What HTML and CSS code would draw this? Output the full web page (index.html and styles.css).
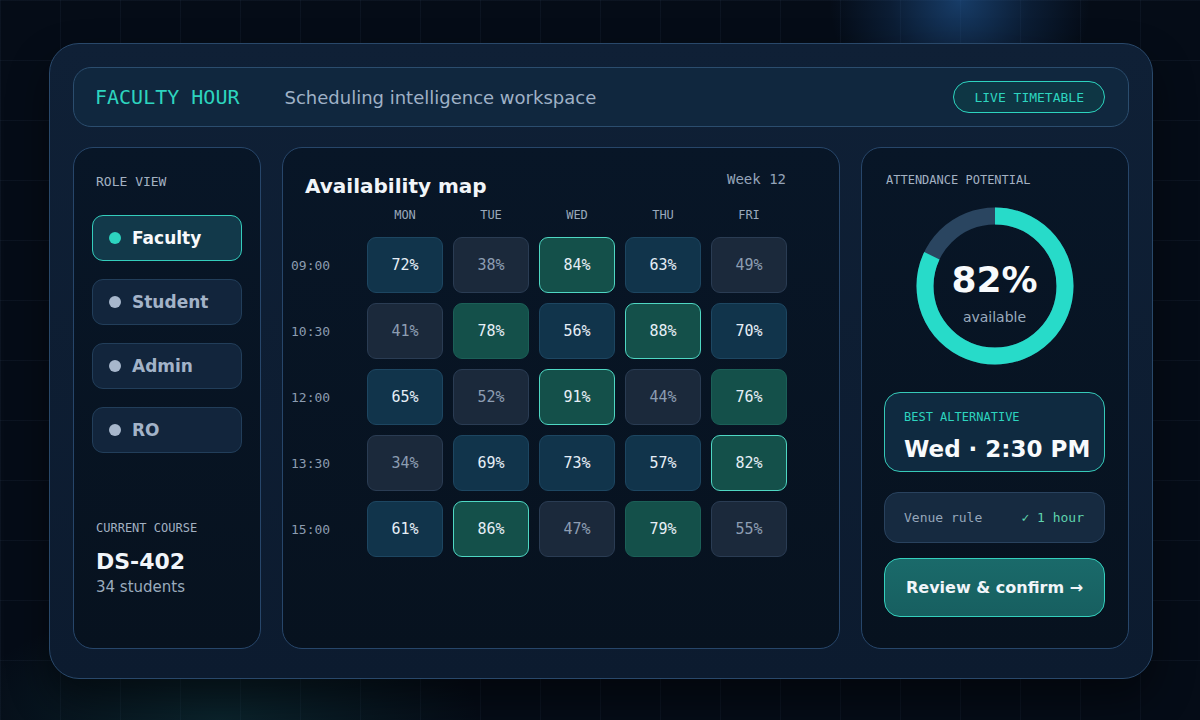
FILE: index.html
```html
<!DOCTYPE html>
<html>

<head>
  <meta charset="utf-8">
  <link rel="stylesheet" href="styles.css">
</head>

<body>
  <div class="shell">
    <div class="topbar">
      <div class="brand">FACULTY HOUR</div>
      <div class="tagline">Scheduling intelligence workspace</div>
      <div class="live-pill">LIVE TIMETABLE</div>
    </div>

    <div class="workspace">
      <!-- roles + course -->
      <div class="panel side">
        <div class="label role-label">ROLE VIEW</div>
        <div class="roles">
          <div class="role active"><span class="role-dot"></span>Faculty</div>
          <div class="role"><span class="role-dot"></span>Student</div>
          <div class="role"><span class="role-dot"></span>Admin</div>
          <div class="role"><span class="role-dot"></span>RO</div>
        </div>
        <div class="course">
          <div class="label">CURRENT COURSE</div>
          <div class="course-code">DS-402</div>
          <div class="course-size">34 students</div>
        </div>
      </div>

      <!-- heatmap -->
      <div class="panel map">
        <div class="map-head">
          <h2 class="map-title">Availability map</h2>
          <div class="week">Week 12</div>
        </div>
        <div class="heat-grid">
          <div></div>
          <div class="day">MON</div>
          <div class="day">TUE</div>
          <div class="day">WED</div>
          <div class="day">THU</div>
          <div class="day">FRI</div>

          <div class="time">09:00</div>
          <div class="cell mid">72%</div>
          <div class="cell low">38%</div>
          <div class="cell top">84%</div>
          <div class="cell mid">63%</div>
          <div class="cell low">49%</div>

          <div class="time">10:30</div>
          <div class="cell low">41%</div>
          <div class="cell high">78%</div>
          <div class="cell mid">56%</div>
          <div class="cell top">88%</div>
          <div class="cell mid">70%</div>

          <div class="time">12:00</div>
          <div class="cell mid">65%</div>
          <div class="cell low">52%</div>
          <div class="cell top">91%</div>
          <div class="cell low">44%</div>
          <div class="cell high">76%</div>

          <div class="time">13:30</div>
          <div class="cell low">34%</div>
          <div class="cell mid">69%</div>
          <div class="cell mid">73%</div>
          <div class="cell mid">57%</div>
          <div class="cell top">82%</div>

          <div class="time">15:00</div>
          <div class="cell mid">61%</div>
          <div class="cell top">86%</div>
          <div class="cell low">47%</div>
          <div class="cell high">79%</div>
          <div class="cell low">55%</div>
        </div>
      </div>

      <!-- summary -->
      <div class="panel summary">
        <div class="label attend-label">ATTENDANCE POTENTIAL</div>
        <div class="donut">
          <svg class="donut-ring" viewBox="0 0 158 158">
            <circle cx="79" cy="79" r="70" fill="none" stroke="#2a4560" stroke-width="17" />
            <circle cx="79" cy="79" r="70" fill="none" stroke="#27dbc9" stroke-width="17"
              stroke-dasharray="360.65 439.82" transform="rotate(-90 79 79)" />
          </svg>
          <div class="donut-text">
            <div class="donut-value">82%</div>
            <div class="donut-caption">available</div>
          </div>
        </div>

        <div class="best">
          <div class="best-label">BEST ALTERNATIVE</div>
          <div class="best-slot">Wed · 2:30 PM</div>
        </div>

        <div class="rule">
          <span class="rule-name">Venue rule</span>
          <span class="rule-ok">✓ 1 hour</span>
        </div>

        <button class="confirm">Review &amp; confirm →</button>
      </div>
    </div>
  </div>
</body>

</html>
```

FILE: styles.css
```css
* {
  box-sizing: border-box;
  margin: 0;
  padding: 0;
}

:root {
  --page: #050c17;
  --shell-border: #29486a;
  --panel-border: #27466a;
  --teal: #2dd4bf;
  --text: #f1f5f9;
  --mono: "DejaVu Sans Mono", "Liberation Mono", monospace;
  --sans: "DejaVu Sans", "Noto Sans", sans-serif;
}

body {
  width: 1200px;
  height: 720px;
  overflow: hidden;
  font-family: var(--sans);
  color: var(--text);
  background:
    radial-gradient(circle at 960px 0px, rgba(38, 100, 170, 0.55) 0, rgba(30, 80, 140, 0.25) 70px, rgba(20, 50, 90, 0) 130px),
    radial-gradient(ellipse 260px 120px at 220px 720px, rgba(30, 120, 120, 0.22), rgba(30, 120, 120, 0)),
    linear-gradient(rgba(120, 160, 200, 0.06) 1px, transparent 1px),
    linear-gradient(90deg, rgba(120, 160, 200, 0.06) 1px, transparent 1px),
    var(--page);
  background-size: auto, auto, 60px 60px, 60px 60px, auto;
}

.shell {
  width: 1104px;
  height: 636px;
  margin: 43px 0 0 49px;
  padding: 23px;
  border: 1px solid var(--shell-border);
  border-radius: 30px;
  background: linear-gradient(180deg, #0f2036 0%, #0c1b2f 100%);
  box-shadow: 0 20px 40px rgba(0, 0, 0, 0.45);
}

/* top bar */
.topbar {
  height: 60px;
  display: flex;
  align-items: center;
  padding: 0 23px 0 21px;
  border: 1px solid #2b4d6e;
  border-radius: 18px;
  background: #10273e;
}

.brand {
  font-family: var(--mono);
  font-size: 20px;
  color: var(--teal);
  margin-right: 45px;
}

.tagline {
  font-size: 18px;
  color: #9fb1c6;
}

.live-pill {
  margin-left: auto;
  height: 32px;
  padding: 0 20px;
  display: flex;
  align-items: center;
  border: 1px solid var(--teal);
  border-radius: 16px;
  background: #0e3644;
  font-family: var(--mono);
  font-size: 13px;
  color: var(--teal);
}

/* three columns */
.workspace {
  margin-top: 20px;
  display: grid;
  grid-template-columns: 188px 558px 268px;
  column-gap: 21px;
  height: 502px;
}

.panel {
  border: 1px solid var(--panel-border);
  border-radius: 20px;
  background: linear-gradient(180deg, #081627 0%, #07121f 100%);
}

.label {
  font-family: var(--mono);
  font-size: 12px;
  line-height: 15px;
  color: #a3b1c2;
}

/* left column */
.side {
  display: flex;
  flex-direction: column;
  padding: 26px 18px 52px 18px;
}

.role-label {
  font-size: 13px;
  line-height: 16px;
  margin-left: 4px;
  margin-bottom: 25px;
}

.roles {
  display: flex;
  flex-direction: column;
  gap: 18px;
}

.role {
  height: 46px;
  display: flex;
  align-items: center;
  gap: 11px;
  padding-left: 16px;
  border: 1px solid #223e5a;
  border-radius: 11px;
  background: #12253c;
  font-size: 17px;
  font-weight: 700;
  color: #a3b3c8;
}

.role-dot {
  width: 12px;
  height: 12px;
  border-radius: 50%;
  background: #a7b7cc;
}

.role.active {
  border-color: #34cdbc;
  background: #12394a;
  color: #f8fafc;
}

.role.active .role-dot {
  background: var(--teal);
}

.course {
  margin-top: auto;
  padding-left: 4px;
}

.course-code {
  margin-top: 13px;
  font-size: 22px;
  font-weight: 700;
  line-height: 26px;
}

.course-size {
  margin-top: 3px;
  font-size: 15px;
  color: #9aabbd;
}

/* availability map */
.map {
  padding: 22px 52px 0 8px;
}

.map-head {
  display: flex;
  justify-content: space-between;
  align-items: flex-start;
  padding-left: 14px;
}

.map-title {
  margin-top: 4px;
  font-size: 20px;
  line-height: 24px;
  font-weight: 700;
  color: #f1f5f9;
}

.week {
  font-family: var(--mono);
  font-size: 14px;
  line-height: 18px;
  margin-right: 1px;
  color: #94a3b8;
}

.heat-grid {
  margin-top: 9px;
  display: grid;
  grid-template-columns: 66px repeat(5, 76px);
  grid-template-rows: 20px;
  grid-auto-rows: 56px;
  gap: 10px;
}

.day {
  font-family: var(--mono);
  font-size: 12px;
  line-height: 16px;
  text-align: center;
  color: #9aa9bb;
}

.time {
  display: flex;
  align-items: center;
  font-family: var(--mono);
  font-size: 13px;
  color: #8c9cb0;
}

.cell {
  display: flex;
  align-items: center;
  justify-content: center;
  border: 1px solid;
  border-radius: 9px;
  font-family: var(--mono);
  font-size: 15px;
}

.cell.low {
  background: #1b293b;
  border-color: #2a3c53;
  color: #8d9db2;
}

.cell.mid {
  background: #11344b;
  border-color: #1d4661;
  color: #e6eef6;
}

.cell.high {
  background: #14504a;
  border-color: #1b5f57;
  color: #e6eef6;
}

.cell.top {
  background: #14504a;
  border-color: #4fd7c3;
  color: #e6eef6;
}

/* summary column */
.summary {
  display: flex;
  flex-direction: column;
  padding: 25px 23px 0 22px;
}

.attend-label {
  margin-left: 2px;
}

.donut {
  margin-top: 19px;
  align-self: center;
  display: grid;
  width: 158px;
  height: 158px;
}

.donut-ring,
.donut-text {
  grid-area: 1 / 1;
}

.donut-ring {
  width: 158px;
  height: 158px;
}

.donut-text {
  display: flex;
  flex-direction: column;
  align-items: center;
  padding-top: 53px;
}

.donut-value {
  font-size: 36px;
  line-height: 40px;
  font-weight: 700;
  color: #f8fafc;
}

.donut-caption {
  margin-top: 8px;
  font-size: 14px;
  line-height: 18px;
  color: #9aabbd;
}

.best {
  margin-top: 27px;
  height: 80px;
  padding: 17px 10px 0 19px;
  border: 1px solid #36c9b8;
  border-radius: 16px;
  background: #0f2a40;
}

.best-label {
  font-family: var(--mono);
  font-size: 12px;
  line-height: 15px;
  color: var(--teal);
}

.best-slot {
  margin-top: 10px;
  font-size: 23px;
  line-height: 28px;
  font-weight: 700;
  white-space: nowrap;
  color: #f8fafc;
}

.rule {
  margin-top: 20px;
  height: 51px;
  display: flex;
  align-items: center;
  justify-content: space-between;
  padding: 0 20px 0 19px;
  border: 1px solid #29425e;
  border-radius: 14px;
  background: #162a40;
  font-family: var(--mono);
  font-size: 13px;
}

.rule-name {
  color: #95a6ba;
}

.rule-ok {
  color: #5fd4ad;
}

.confirm {
  margin-top: 15px;
  height: 59px;
  border: 1px solid #34d0bd;
  border-radius: 16px;
  background: linear-gradient(180deg, #1a6a6a 0%, #175f60 100%);
  font-family: var(--sans);
  font-size: 16px;
  font-weight: 700;
  color: #f1f5f9;
  cursor: pointer;
}
```
